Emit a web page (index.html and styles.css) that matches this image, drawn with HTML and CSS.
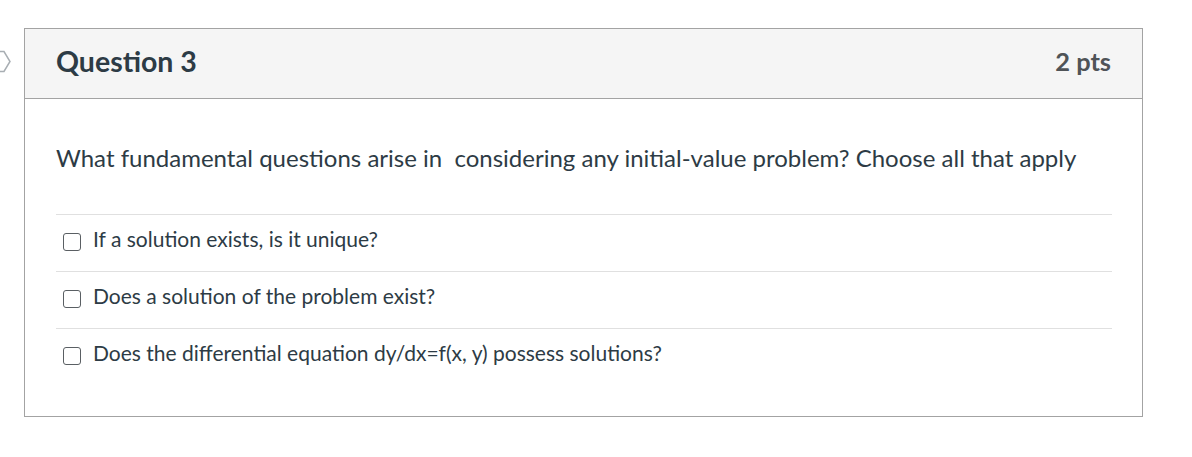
FILE: index.html
```html
<!DOCTYPE html>
<html>
<head>
<meta charset="utf-8">
<link rel="stylesheet" href="styles.css">
</head>
<body>
<svg class="flag" width="14" height="24" viewBox="0 0 14 24"><polygon points="-8,1.5 4,1.5 10,11.5 4,21.5 -8,21.5" fill="none" stroke="#a8aeb3" stroke-width="1.5"/></svg>
<div class="question">
  <div class="header">
    <span class="title">Question 3</span>
    <span class="pts">2 pts</span>
  </div>
  <div class="content">
    <p class="text">What fundamental questions arise in &nbsp;considering any initial-value problem? Choose all that apply</p>
    <div class="answers">
      <label class="answer"><span class="box"></span>If a solution exists, is it unique?</label>
      <label class="answer"><span class="box"></span>Does a solution of the problem exist?</label>
      <label class="answer"><span class="box"></span>Does the differential equation dy/dx=f(x, y) possess solutions?</label>
    </div>
  </div>
</div>
</body>
</html>
```
FILE: styles.css
```css
html, body { margin: 0; padding: 0; background: #fff; }
body {
  font-family: Lato, "Open Sans", sans-serif;
  color: #2d3b45;
  padding: 28px 0 0 24px;
  position: relative;
}
.flag { position: absolute; left: 0; top: 50px; }
.question {
  border: 1px solid #a3a3a3;
  box-sizing: border-box;
  width: 1119px;
}
.header {
  background: #f5f5f5;
  border-bottom: 1px solid #a3a3a3;
  height: 70px;
  box-sizing: border-box;
  display: flex;
  align-items: center;
  justify-content: space-between;
  padding: 0 31px 5px 31px;
}
.title { font-size: 28.5px; font-weight: 700; color: #2d3b45; }
.pts { font-size: 25.4px; font-weight: 700; color: #4f5357; }
.content { padding: 0 30px 31px 31px; }
.text { margin: 0; font-size: 24px; line-height: 30px; padding-top: 44px; padding-bottom: 41px; }
.answers { border-top: 1px solid #e0e0e0; }
.answer {
  display: flex; align-items: center;
  padding-bottom: 9px;
  box-sizing: border-box;
  border-bottom: 1px solid #e0e0e0;
  font-size: 21px;
  height: 57px;
}
.answer:last-child { border-bottom: none; height: 56px; }
.box {
  width: 16px; height: 16px;
  border: 1.6px solid #5a5f63;
  border-radius: 3px;
  margin: 6px 12px 0 7px;
  flex: none;
}
```
